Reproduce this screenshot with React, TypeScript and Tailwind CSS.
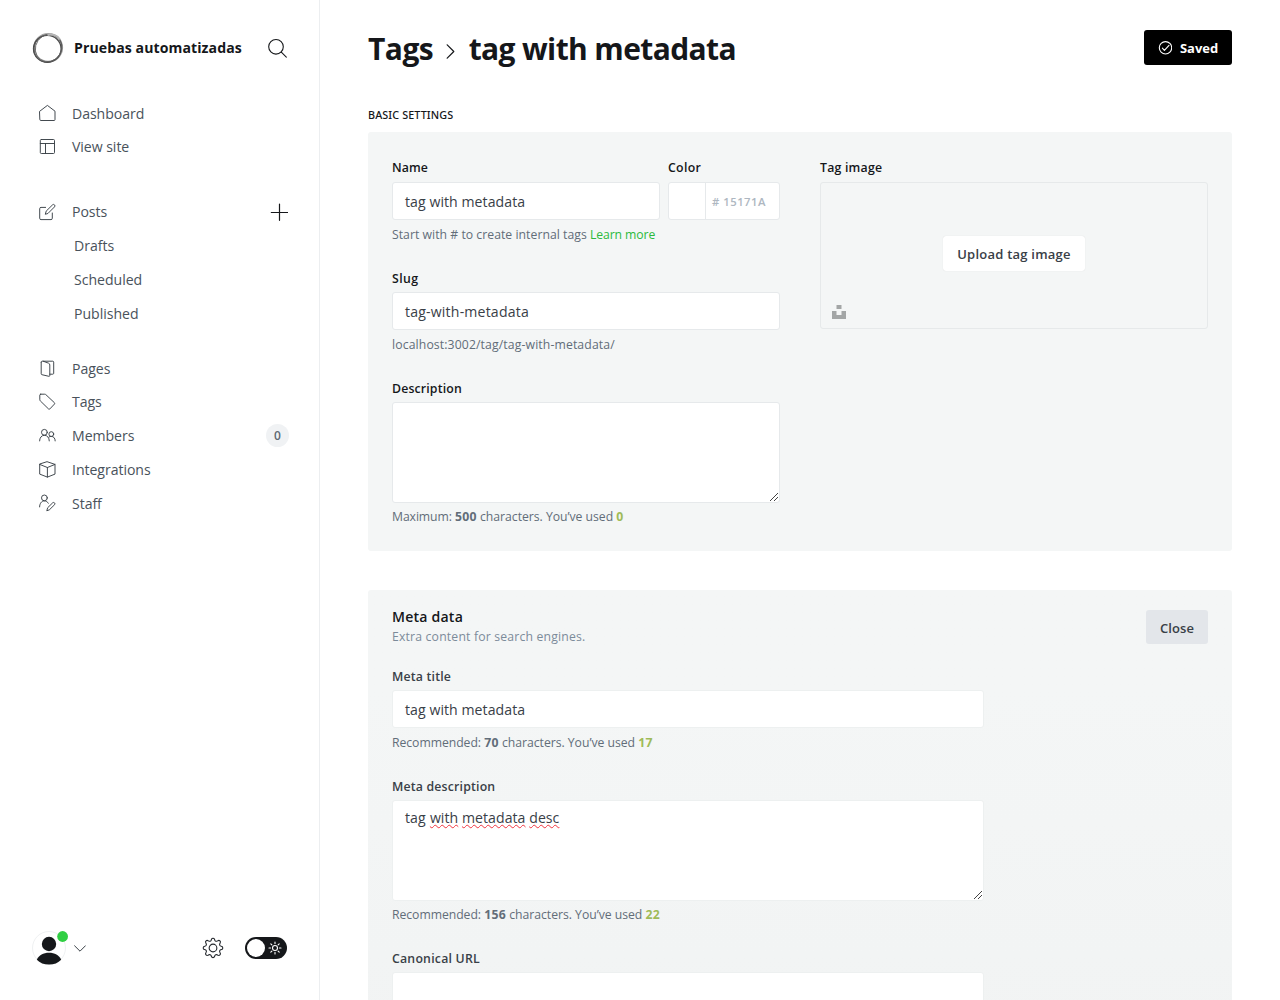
import type { ReactNode } from 'react';

function Icon({ children, className = '' }: { children: ReactNode; className?: string }) {
  return (
    <svg
      viewBox="0 0 17 17"
      className={'h-[17px] w-[17px] shrink-0 overflow-visible text-[#394047] ' + className}
      fill="none"
      stroke="currentColor"
      strokeWidth="0.95"
      strokeLinecap="round"
      strokeLinejoin="round"
    >
      {children}
    </svg>
  );
}

const HomeIcon = () => (
  <Icon>
    <path d="M.8 6.2 8.4.4 16 6.2v8.4a.9.9 0 0 1-.9.9H1.7a.9.9 0 0 1-.9-.9z" />
  </Icon>
);
const LayoutIcon = () => (
  <Icon>
    <rect x="1.3" y="1.5" width="14.2" height="14" rx="1" />
    <path d="M1.3 5.5h14.2M6.5 5.5v10" />
  </Icon>
);
const PostsIcon = () => (
  <Icon>
    <path d="M6.6 4.4H2a1.3 1.3 0 0 0-1.3 1.3v9.6A1.3 1.3 0 0 0 2 16.6h10a1.3 1.3 0 0 0 1.3-1.3V10" />
    <path d="M6.4 10.9l.8-2.8 6.3-6.2a1.4 1.4 0 0 1 2 2L9.2 10.2z" />
  </Icon>
);
const PagesIcon = () => (
  <Icon>
    <path d="M2.2 2.2v11.6c0 .5.3.8.7.9l7 1.600c.5.1.9-.2.9-.7V5c0-.9-.4-1.500-1.200-1.800L4.200 1.200" />
    <path d="M2.200 2.200c0-.6.4-1 1-1h10.600c.5 0 .9.4.9.9v11.200c0 .5-.4.9-.9.9h-3" />
  </Icon>
);
const TagIcon = () => (
  <Icon>
    <path d="M1.7 1.2h4c.5 0 .9.2 1.2.5l8.5 8c.4.4.4.9.1 1.3l-4.6 4.9c-.4.4-.9.4-1.3.1L1.3 7.9C1 7.6.8 7.2.8 6.8V2.1c0-.5.4-.9.9-.9z" />
  </Icon>
);
const MembersIcon = () => (
  <Icon>
    <circle cx="5.4" cy="5.3" r="2.9" />
    <path d="M.6 13.9c0-3.3 2-5.6 4.8-5.6s4.9 2.3 4.9 5.6" />
    <circle cx="12.3" cy="7.1" r="2.4" />
    <path d="M10.1 9.9c.7-.4 1.4-.5 2.2-.5 2.3 0 3.9 1.8 3.9 4.5" />
  </Icon>
);
const BoxIcon = () => (
  <Icon>
    <path d="M8.4.8 16 3.4v9.7l-7.6 3L.7 13.1V3.4z" />
    <path d="M.7 3.4 8.4 6.5 16 3.4M8.4 6.5v9.6" />
  </Icon>
);
const StaffIcon = () => (
  <Icon>
    <circle cx="5.4" cy="2.9" r="2.9" />
    <path d="M.6 11.9c0-3.3 1.9-6 4.8-6 1.7 0 3.1.9 3.9 2.3" />
    <path d="M7.900 15.400l.8-2.700 5-4.900a1.350 1.350 0 0 1 1.900 1.900l-5 4.900z" />
  </Icon>
);

function NavItem({ icon, label, className = '', children }: { icon: ReactNode; label: string; className?: string; children?: ReactNode }) {
  return (
    <a className={'flex h-[33px] items-center ' + className}>
      {icon}
      <span className="ml-4 flex-1 text-[14.1px] leading-[33px] tracking-[-0.05px]">{label}</span>
      {children}
    </a>
  );
}

function SubItem({ label }: { label: string }) {
  return <a className="mt-px block h-[33px] pl-[35px] text-[14.1px] leading-[33px] tracking-[-0.02px]">{label}</a>;
}

function Logo() {
  return (
    <svg viewBox="0 0 32 32" className="h-8 w-8" fill="none">
      <ellipse cx="16.2" cy="15.7" rx="14" ry="13.9" stroke="#a3a3a3" strokeWidth="1.8" />
      <ellipse cx="15.3" cy="16.8" rx="13.8" ry="13.5" stroke="#4a4a4a" strokeWidth="1.3" />
      <ellipse cx="16.5" cy="15.6" rx="12.9" ry="14.2" stroke="#6f6f6f" strokeWidth=".9" transform="rotate(35 16 16)" />
      <ellipse cx="15.7" cy="16.2" rx="14.5" ry="13.3" stroke="#555" strokeWidth=".8" transform="rotate(-40 16 16)" />
      <path d="M15.5 3c5-1.400 10 .4 12.300 4.400" stroke="#b5b5b5" strokeWidth="2" />
    </svg>
  );
}

function GearIcon() {
  return (
    <svg viewBox="0 0 24 24" className="h-[22px] w-[22px]" fill="none" stroke="#23272c" strokeWidth="1.2" strokeLinejoin="round">
      <circle cx="12" cy="12" r="4.2" />
      <path d="M10.3 2.6a1.8 1.8 0 0 1 3.4 0l.3.9a1.8 1.8 0 0 0 2.5 1l.8-.4a1.8 1.8 0 0 1 2.5 2.5l-.4.8a1.8 1.8 0 0 0 1 2.5l.9.3a1.8 1.8 0 0 1 0 3.5l-.9.3a1.8 1.8 0 0 0-1 2.5l.4.8a1.8 1.8 0 0 1-2.5 2.5l-.8-.4a1.8 1.8 0 0 0-2.5 1l-.3.9a1.8 1.8 0 0 1-3.4 0l-.3-.9a1.8 1.8 0 0 0-2.5-1l-.8.4a1.8 1.8 0 0 1-2.5-2.5l.4-.8a1.8 1.8 0 0 0-1-2.5l-.9-.3a1.8 1.8 0 0 1 0-3.5l.9-.3a1.8 1.8 0 0 0 1-2.5l-.4-.8a1.8 1.8 0 0 1 2.5-2.5l.8.4a1.8 1.8 0 0 0 2.5-1z" />
    </svg>
  );
}

function SunIcon() {
  return (
    <svg viewBox="0 0 14 14" className="h-[14px] w-[14px]" fill="none" stroke="#fff" strokeWidth="1.1" strokeLinecap="round">
      <circle cx="7" cy="7" r="2.5" />
      <path d="M7 1v1.6M7 11.4V13M1 7h1.6M11.4 7H13M2.8 2.8l1.1 1.1M10.1 10.1l1.1 1.1M2.8 11.2l1.1-1.1M10.1 3.9l1.1-1.1" />
    </svg>
  );
}

function Sidebar() {
  return (
    <nav className="flex h-full w-80 shrink-0 flex-col border-r border-[#eceef0] pl-[39px] pr-8 text-[#49525b]">
      <div className="-ml-[7px] mt-8 flex h-8 items-center">
        <Logo />
        <span className="ml-[10px] flex-1 text-[14.1px] font-bold leading-8 tracking-[0.08px] text-[#15171a]">Pruebas automatizadas</span>
        <svg viewBox="0 0 20 20" className="h-5 w-5 overflow-visible" fill="none" stroke="#15171a" strokeWidth="1.1" strokeLinecap="round">
          <circle cx="9" cy="8.8" r="7.3" />
          <path d="M14.3 14.1l5 5" />
        </svg>
      </div>

      <div className="mt-[33px]">
        <NavItem icon={<HomeIcon />} label="Dashboard" />
        <NavItem icon={<LayoutIcon />} label="View site" />
      </div>

      <div className="mt-8">
        <NavItem icon={<PostsIcon />} label="Posts">
          <svg viewBox="0 0 18 18" className="-mr-px h-[18px] w-[18px]" stroke="#15171a" strokeWidth="1.2" strokeLinecap="round">
            <path d="M9.5 1v16.300M1.300 9.500h16.300" />
          </svg>
        </NavItem>
        <SubItem label="Drafts" />
        <SubItem label="Scheduled" />
        <SubItem label="Published" />
      </div>

      <div className="mt-[22px]">
        <NavItem icon={<PagesIcon />} label="Pages" />
        <NavItem icon={<TagIcon />} label="Tags" />
        <NavItem icon={<MembersIcon />} label="Members" className="mt-px">
          <span className="-mr-[2px] h-[23px] w-[23px] rounded-full bg-[#f0f2f4] text-center text-[12px] font-semibold leading-[24px] text-[#5d6872]">0</span>
        </NavItem>
        <NavItem icon={<BoxIcon />} label="Integrations" className="mt-px" />
        <NavItem icon={<StaffIcon />} label="Staff" className="mt-px" />
      </div>

      <div className="-ml-[7px] mb-[35px] mt-auto flex h-[34px] items-center">
        <svg viewBox="0 0 34 34" className="h-[34px] w-[34px] overflow-visible">
          <circle cx="17" cy="17" r="16.5" fill="#fff" stroke="#eff1f2" strokeWidth="1" />
          <circle cx="17" cy="13" r="7.2" fill="#15171a" />
          <path d="M4.8 28.7c2-4.7 6.6-7 12.2-7s10.2 2.3 12.2 7c-3 3.2-7.3 4.9-12.2 4.9s-9.2-1.7-12.2-4.9z" fill="#15171a" />
          <circle cx="30.6" cy="5.5" r="5.4" fill="#30cf43" />
        </svg>
        <svg viewBox="0 0 12 7" className="ml-2 mt-px h-[7px] w-3" fill="none" stroke="#394047" strokeWidth="1" strokeLinecap="round" strokeLinejoin="round">
          <path d="M.6.8 6 6.2 11.4.8" />
        </svg>
        <div className="flex-1" />
        <GearIcon />
        <div className="ml-[21px] flex h-[22px] w-[42px] items-center rounded-full bg-[#15171a] pl-[2px]">
          <span className="h-[18px] w-[18px] shrink-0 rounded-full bg-white" />
          <span className="ml-[3px]"><SunIcon /></span>
        </div>
      </div>
    </nav>
  );
}

function Label({ children, className = '' }: { children: ReactNode; className?: string }) {
  return <div className={'h-[19px] whitespace-nowrap text-[12.3px] font-semibold leading-[19px] ' + className}>{children}</div>;
}

function Help({ children, className = '' }: { children: ReactNode; className?: string }) {
  return <p className={'h-[19px] whitespace-nowrap text-[12.22px] leading-[19px] text-[#626d79] ' + className}>{children}</p>;
}

function TextBox({ children, className = '' }: { children?: ReactNode; className?: string }) {
  return (
    <div className={'h-[38px] whitespace-nowrap rounded-[3px] border bg-white px-3 text-[14.1px] leading-[37px] text-[#394047] ' + className}>
      {children}
    </div>
  );
}

function TextArea({ children, className = '' }: { children?: ReactNode; className?: string }) {
  return (
    <div className={'relative h-[101px] whitespace-nowrap rounded-[3px] border bg-white px-3 pt-[6px] text-[14.1px] leading-[22px] tracking-[0.05px] text-[#394047] ' + className}>
      {children}
      <svg viewBox="0 0 10 10" className="absolute bottom-0 right-0 h-[10px] w-[10px]" stroke="#444" strokeWidth="1">
        <path d="M1 9 9 1M5 9l4-4" />
      </svg>
    </div>
  );
}

function CharacterHelp({ kind, kindClass, max, used }: { kind: string; kindClass: string; max: number; used: number }) {
  return (
    <>
      <span className={kindClass}>{kind}:</span> <b className="tracking-[0.3px]">{max}</b>{' '}
      <span className="tracking-[-0.03px]">characters. You’ve used</span>{' '}
      <b className="tracking-[0.3px] text-[#9fbb58]">{used}</b>
    </>
  );
}

function Misspelled({ children }: { children: ReactNode }) {
  return <span className="underline decoration-[#f0343f] decoration-wavy decoration-[1px] underline-offset-[1px] [text-decoration-skip-ink:none]">{children}</span>;
}

function BasicSettings() {
  return (
    <section className="mt-[10px] flex h-[419px] gap-10 rounded-[3px] bg-[#f4f6f6] px-6 pt-[26px] text-[#15171a]">
      <div className="w-[388px]">
        <div className="flex gap-2">
          <div className="w-[268px]">
            <Label className="mb-[5px] tracking-[0.12px]">Name</Label>
            <TextBox className="border-[#e6e9eb] tracking-[0.06px]">tag with metadata</TextBox>
          </div>
          <div className="w-28">
            <Label className="mb-[5px] tracking-[0.3px]">Color</Label>
            <div className="flex h-[38px] rounded-[3px] border border-[#e6e9eb] bg-white">
              <span className="w-[37px] border-r border-[#e6e9eb]" />
              <span className="pl-[6px] text-[11.3px] font-semibold leading-[37px] tracking-[0.5px] text-[#aeb7c1]"># 15171A</span>
            </div>
          </div>
        </div>
        <Help className="mt-[5px]">
          <span className="tracking-[0.03px]">Start with # to create internal tags</span>{' '}
          <a className="tracking-[-0.1px] text-[#2bba3c]">Learn more</a>
        </Help>
        <Label className="mb-1 mt-[25px] tracking-[0.4px]">Slug</Label>
        <TextBox className="border-[#e6e9eb] tracking-[0.18px]">tag-with-metadata</TextBox>
        <Help className="mt-[5px] tracking-[0.12px]">localhost:3002/tag/tag-with-metadata/</Help>
        <Label className="mb-1 mt-[25px] tracking-[0.15px]">Description</Label>
        <TextArea className="border-[#e6e9eb]" />
        <Help className="mt-1">
          <CharacterHelp kind="Maximum" kindClass="tracking-[-0.1px]" max={500} used={0} />
        </Help>
      </div>
      <div className="w-[388px]">
        <Label className="mb-[5px] tracking-[0.22px]">Tag image</Label>
        <div className="relative flex h-[147px] items-center justify-center rounded-[3px] border border-[#e6e9ea]">
          <button className="mb-[4px] h-[35px] w-[142px] rounded-[3px] bg-white text-[13px] font-semibold leading-[37px] tracking-[0.23px] text-[#394047] shadow-[0_0_1px_rgba(0,0,0,0.15)]">
            Upload tag image
          </button>
          <svg viewBox="0 0 14 14" className="absolute bottom-[9px] left-[11px] h-[14px] w-[14px]" fill="#a3a6a6">
            <path d="M4.5 0h5v4h-5zM0 6h4.5v4h5V6H14v8H0z" />
          </svg>
        </div>
      </div>
    </section>
  );
}

function MetaData() {
  return (
    <section className="mt-[39px] rounded-t-[3px] bg-linear-to-b from-[#f4f6f6] from-20% to-[#f1f3f3] px-6 pb-20 text-[#394047]">
      <div className="flex justify-between pt-4">
        <div>
          <h4 className="h-[21px] text-[14.1px] font-semibold leading-[22px] tracking-[0.2px] text-[#15171a]">Meta data</h4>
          <p className="h-[19px] text-[12.22px] leading-[19px] tracking-[0.18px] text-[#7c8b9a]">Extra content for search engines.</p>
        </div>
        <button className="mt-1 h-[34px] w-[62px] rounded-[3px] bg-[#e3e6ea] text-[13px] font-semibold leading-[36px] tracking-[0.1px]">Close</button>
      </div>
      <div className="w-[591.5px]">
        <Label className="mb-1 mt-[21px] tracking-[0.18px]">Meta title</Label>
        <TextBox className="border-[#edf0f0] tracking-[0.06px]">tag with metadata</TextBox>
        <Help className="mt-[5px]">
          <CharacterHelp kind="Recommended" kindClass="tracking-[-0.05px]" max={70} used={17} />
        </Help>
        <Label className="mb-1 mt-[25px] tracking-[0.18px]">Meta description</Label>
        <TextArea className="border-[#edf0f0]">
          <span className="mr-[0.5px]">tag</span> <Misspelled>with</Misspelled> <Misspelled>metadata</Misspelled> <Misspelled>desc</Misspelled>
        </TextArea>
        <Help className="mt-1">
          <CharacterHelp kind="Recommended" kindClass="tracking-[-0.05px]" max={156} used={22} />
        </Help>
        <Label className="mb-1 mt-[25px] tracking-[0.22px]">Canonical URL</Label>
        <TextBox className="border-[#edf0f0]" />
      </div>
    </section>
  );
}

export default function App() {
  return (
    <div className="flex h-[1000px] w-[1280px] overflow-hidden bg-white [font-family:'Open_Sans','Noto_Sans',sans-serif]">
      <Sidebar />
      <main className="min-w-0 flex-1 px-12">
        <header className="mt-[30px] flex h-[35px] items-center justify-between text-[#15171a]">
          <h2 className="flex items-center whitespace-nowrap pt-[2px] text-[30px] font-bold leading-[35px]">
            <span className="tracking-[-0.55px]">Tags</span>
            <svg viewBox="0 0 8 15" className="ml-[13px] mr-[14.5px] mt-[5px] h-[15px] w-2 overflow-visible" fill="none" stroke="#15171a" strokeWidth="1.2" strokeLinecap="round" strokeLinejoin="round">
              <path d="M1.2.8 7.8 7.5 1.2 14.200" />
            </svg>
            <span className="tracking-[-0.62px]">tag with metadata</span>
          </h2>
          <button className="flex h-[35px] w-[88px] items-center rounded-[3px] bg-black pl-[14px] text-[13px] font-bold text-white">
            <svg viewBox="0 0 14 14" className="h-[14px] w-[14px]" fill="none" stroke="#fff" strokeWidth="1.1" strokeLinecap="round" strokeLinejoin="round">
              <circle cx="7.5" cy="6.8" r="6.2" />
              <path d="M4.4 7.200l2 2.100 4.600-5" />
            </svg>
            <span className="ml-2 mt-px leading-[35px] tracking-[-0.05px]">Saved</span>
          </button>
        </header>
        <h4 className="mt-[42px] h-[15px] whitespace-nowrap text-[10.8px] font-medium leading-[15px] tracking-[0.1px] text-[#15171a] [font-family:'Noto_Sans',sans-serif]">
          BASIC SETTINGS
        </h4>
        <BasicSettings />
        <MetaData />
      </main>
    </div>
  );
}
